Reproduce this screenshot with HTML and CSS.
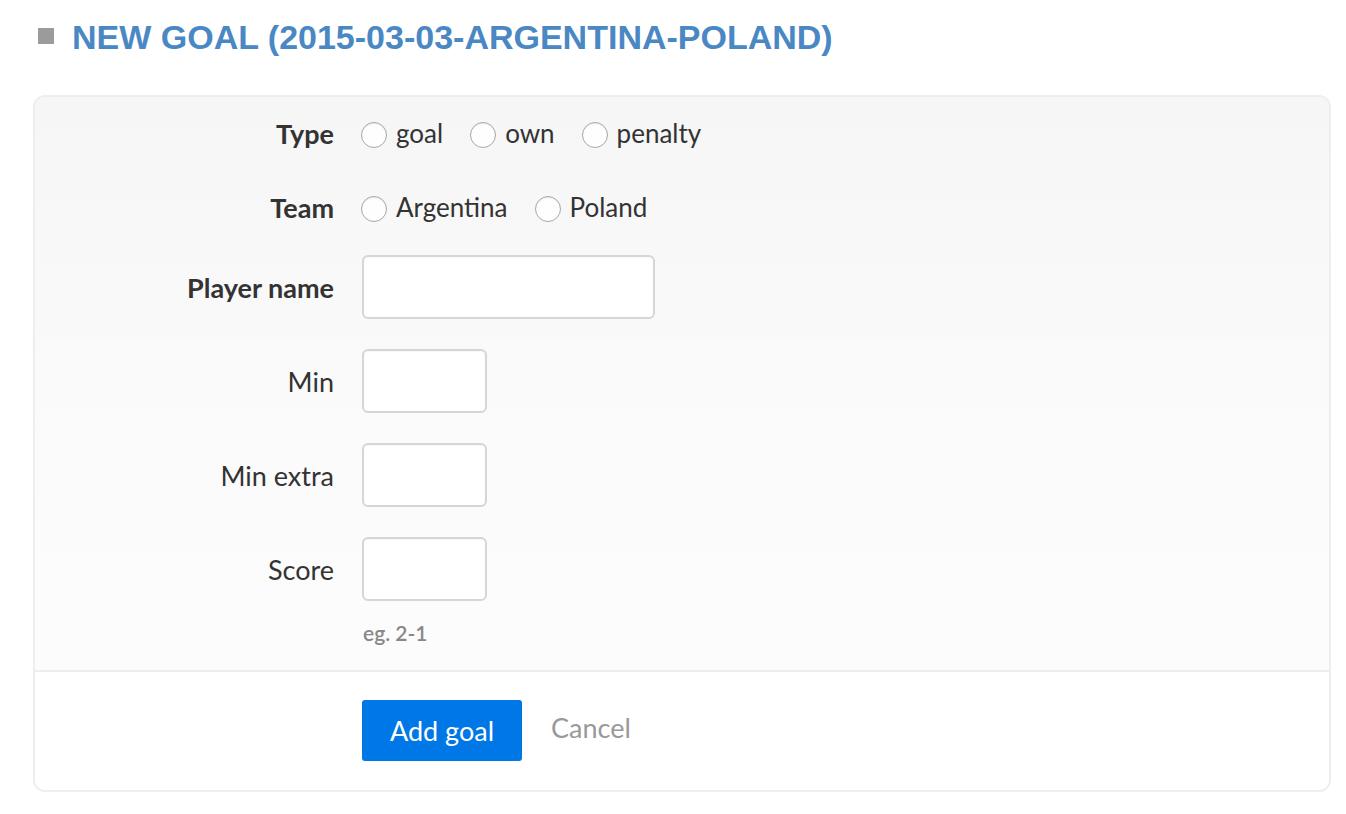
FILE: index.html
```html
<!DOCTYPE html>
<html>
<head>
<meta charset="utf-8">
<link rel="stylesheet" href="styles.css">
</head>
<body>
<h1 class="title"><span class="title-mark"></span>NEW GOAL (2015-03-03-ARGENTINA-POLAND)</h1>
<form class="card">
  <div class="fields">
    <div class="row row-radio row-type">
      <label class="lbl strong">Type</label>
      <div class="ctrl radios">
        <label class="opt"><input type="radio" name="type"><span>goal</span></label>
        <label class="opt"><input type="radio" name="type"><span>own</span></label>
        <label class="opt"><input type="radio" name="type"><span>penalty</span></label>
      </div>
    </div>
    <div class="row row-radio row-team">
      <label class="lbl strong">Team</label>
      <div class="ctrl radios">
        <label class="opt"><input type="radio" name="team"><span>Argentina</span></label>
        <label class="opt"><input type="radio" name="team"><span>Poland</span></label>
      </div>
    </div>
    <div class="row row-input row-player">
      <label class="lbl strong">Player name</label>
      <div class="ctrl"><input class="txt txt-wide" type="text"></div>
    </div>
    <div class="row row-input">
      <label class="lbl">Min</label>
      <div class="ctrl"><input class="txt txt-small" type="text"></div>
    </div>
    <div class="row row-input">
      <label class="lbl">Min extra</label>
      <div class="ctrl"><input class="txt txt-small" type="text"></div>
    </div>
    <div class="row row-input">
      <label class="lbl">Score</label>
      <div class="ctrl"><input class="txt txt-small" type="text"></div>
    </div>
    <div class="row row-help">
      <span class="lbl"></span>
      <div class="ctrl help">eg. 2-1</div>
    </div>
  </div>
  <div class="actions">
    <span class="lbl"></span>
    <div class="ctrl buttons">
      <button type="button" class="btn">Add goal</button>
      <a class="cancel">Cancel</a>
    </div>
  </div>
</form>
</body>
</html>
```
FILE: styles.css
```css
* { box-sizing: border-box; }
html, body { margin: 0; padding: 0; background: #fff; }
body {
  font-family: Lato, "Noto Sans", sans-serif;
  color: #333;
  padding: 0 15px 0 33px;
}
.title {
  margin: 0 0 38px;
  padding-top: 17px;
  font-family: "Liberation Sans", Arial, sans-serif;
  font-weight: bold;
  font-size: 34px;
  line-height: 40px;
  color: #4a88c4;
  display: flex;
  align-items: center;
}
.title-mark {
  display: inline-block;
  width: 16px;
  height: 16px;
  background: #9b9b9b;
  margin-left: 5px;
  margin-right: 18px;
  position: relative;
  top: -1px;
}
.card {
  display: block;
  width: 1298px;
  border: 2px solid #eeeeee;
  border-radius: 12px;
  overflow: hidden;
  background: #fff;
}
.fields {
  background: linear-gradient(#f6f6f6 0%, #fbfbfb 60%, #fcfcfc 100%);
  padding: 16px 0 25px;
  border-bottom: 2px solid #eeeeee;
}
.row, .actions {
  display: grid;
  grid-template-columns: 299px 1fr;
  column-gap: 28px;
  align-items: center;
}
.row-radio { height: 40px; }
.row-team { margin-top: 34px; }
.row-player { margin-top: 28px; }
.row-input { height: 64px; }
.row-input + .row-input { margin-top: 30px; }
.row-help { margin-top: 20px; }
.lbl {
  text-align: right;
  font-size: 27px;
  color: #333;
}
.strong { font-weight: bold; }
.radios { display: flex; align-items: center; }
.opt {
  display: flex;
  align-items: center;
  font-size: 26px;
  color: #333;
  margin-right: 28px;
}
.opt input {
  appearance: none;
  -webkit-appearance: none;
  margin: 0 9px 0 -1px;
  width: 26px;
  height: 26px;
  border-radius: 50%;
  border: 1px solid #a8a8a8;
  background: linear-gradient(#fdfdfd, #ffffff);
  box-shadow: inset 0 1px 1px rgba(0,0,0,0.08);
  position: relative;
  top: 2px;
}
.txt {
  display: block;
  height: 64px;
  border: 2px solid #d6d6d6;
  border-radius: 6px;
  background: #fff;
  box-shadow: inset 0 1px 2px rgba(0,0,0,0.04);
  outline: none;
}
.txt-wide { width: 293px; }
.txt-small { width: 125px; }
.help {
  font-size: 21px;
  line-height: 24px;
  color: #888;
  padding-left: 1px;
  font-weight: 600;
}
.actions {
  padding: 28px 0 29px;
  background: #fff;
}
.buttons { display: flex; align-items: center; }
.btn {
  width: 160px;
  height: 61px;
  border: none;
  border-radius: 3px;
  background: #0077e6;
  color: #fff;
  font-family: Lato, "Noto Sans", sans-serif;
  font-size: 27px;
  padding: 0;
  margin-right: 29px;
}
.cancel {
  font-size: 27px;
  color: #999;
  position: relative;
  top: -3px;
}
```
